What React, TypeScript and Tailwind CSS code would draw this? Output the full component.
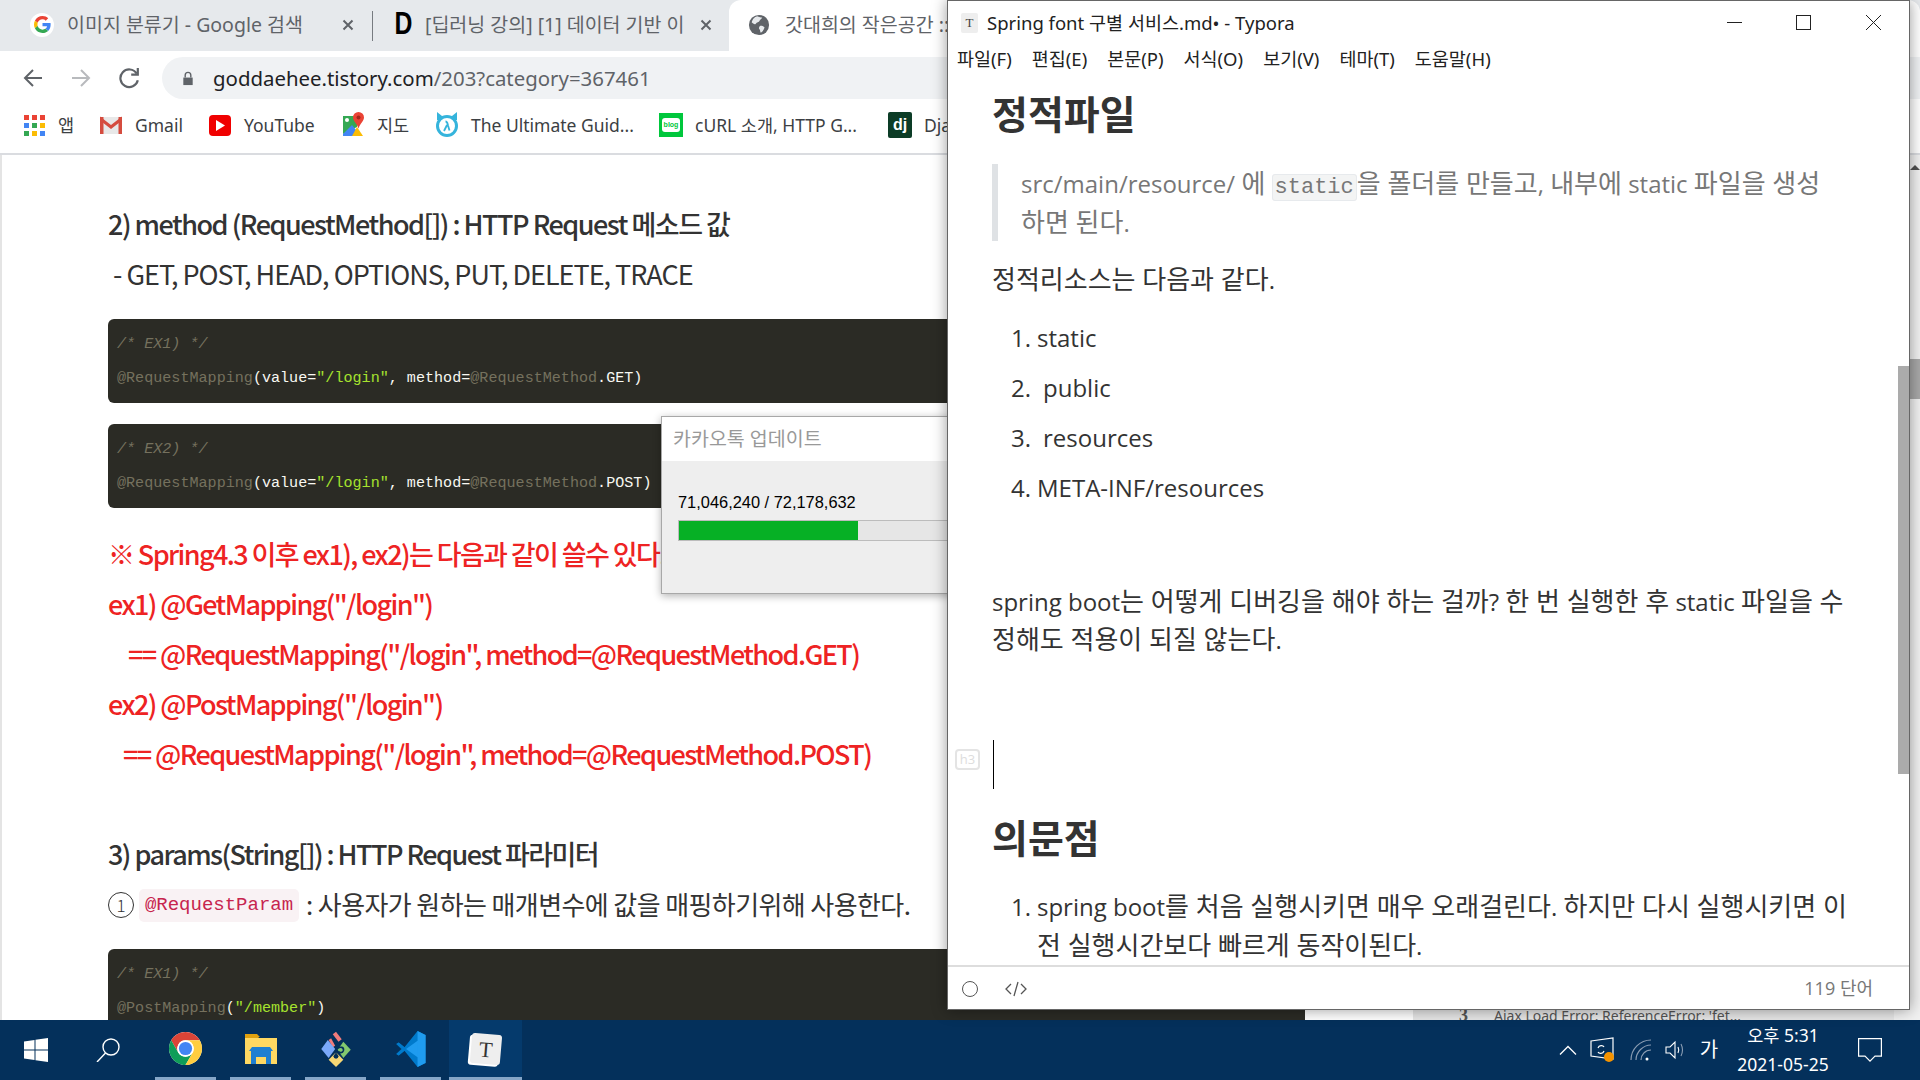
import React from 'react';

// hangul runs are set a bit larger than the latin around them
const ko = (text: string) =>
  text.split(/([\uAC00-\uD7A3]+(?:\s+[\uAC00-\uD7A3]+)*)/).map((part, i) =>
    i % 2 === 1 ? (
      <span key={i} className="text-[26px] leading-none">{part}</span>
    ) : (
      part
    ),
  );

const GoogleIcon = () => (
  <span className="flex h-[24px] w-[24px] shrink-0 items-center justify-center rounded-full bg-white">
    <svg viewBox="0 0 48 48" className="h-[17px] w-[17px]">
      <path fill="#EA4335" d="M24 9.5c3.54 0 6.71 1.22 9.21 3.6l6.85-6.85C35.9 2.38 30.47 0 24 0 14.62 0 6.51 5.38 2.56 13.22l7.98 6.19C12.43 13.72 17.74 9.5 24 9.5z" />
      <path fill="#4285F4" d="M46.98 24.55c0-1.57-.15-3.09-.38-4.55H24v9.02h12.94c-.58 2.96-2.26 5.48-4.78 7.18l7.73 6c4.51-4.18 7.09-10.36 7.09-17.65z" />
      <path fill="#FBBC05" d="M10.53 28.59c-.48-1.45-.76-2.99-.76-4.59s.27-3.14.76-4.59l-7.98-6.19C.92 16.46 0 20.12 0 24c0 3.88.92 7.54 2.56 10.78l7.97-6.19z" />
      <path fill="#34A853" d="M24 48c6.48 0 11.93-2.13 15.89-5.81l-7.73-6c-2.15 1.45-4.92 2.3-8.16 2.3-6.26 0-11.57-4.22-13.47-9.91l-7.98 6.19C6.51 42.62 14.62 48 24 48z" />
    </svg>
  </span>
);

const TabClose = () => (
  <svg viewBox="0 0 12 12" className="h-[12px] w-[12px] shrink-0" stroke="#5f6368" strokeWidth="2">
    <path d="M1.5 1.5l9 9M10.5 1.5l-9 9" />
  </svg>
);

const GlobeIcon = () => (
  <svg viewBox="0 0 24 24" className="h-[22px] w-[22px] shrink-0">
    <circle cx="12" cy="12" r="11" fill="#5f6368" />
    <path fill="#e6e9ec" d="M10 2.5c2 1 4 1.5 5.5 1-.5 2-2.5 2.5-3 4-.5 1.5-3 1-4 3-1 1.500-3 0-4.500-1.500C5 5.500 7 3 10 2.500zM13 13c2-.5 4 .5 5 1.500-.5 2.500-2 4.500-4 6-1-1.500-.5-3-1.500-4-1-1-.5-2.500.5-3.500z" />
  </svg>
);

const AppsIcon = () => (
  <svg viewBox="0 0 21 21" className="h-[21px] w-[21px]">
    {['#ea4335', '#ea4335', '#ea4335', '#4285f4', '#34a853', '#fbbc05', '#34a853', '#fbbc05', '#4285f4'].map((c, i) => (
      <rect key={i} x={(i % 3) * 8} y={Math.floor(i / 3) * 8} width="5" height="5" fill={c} />
    ))}
  </svg>
);

const GmailIcon = () => (
  <svg viewBox="0 0 24 20" className="h-[20px] w-[24px]">
    <path fill="#e8e8e8" d="M1 2h22v17H1z" />
    <path fill="#d54c3f" d="M1 2h3.500v17H1zM19.500 2H23v17h-3.500z" />
    <path fill="#d54c3f" d="M1 1.500l11 8.500 11-8.500v4L12 14 1 5.500z" />
  </svg>
);

const YoutubeIcon = () => (
  <span className="flex h-[21px] w-[22px] items-center justify-center rounded-[4px] bg-[#f00000]">
    <svg viewBox="0 0 10 12" className="h-[11px] w-[9px]"><path fill="#fff" d="M0 0l10 6-10 6z" /></svg>
  </span>
);

const MapsIcon = () => (
  <svg viewBox="0 0 24 26" className="h-[26px] w-[24px]">
    <path fill="#34a853" d="M2 4h14v11L2 22z" />
    <path fill="#4285f4" d="M2 22l9-9 9 11H2z" />
    <path fill="#fbbc05" d="M11 24l5-9 6 9z" />
    <path fill="#ea4335" d="M17.500 0a5.500 5.500 0 0 1 5.500 5.500c0 3.500-4 6-5.500 11-1.500-5-5.500-7.500-5.500-11A5.500 5.500 0 0 1 17.500 0z" />
    <circle cx="17.500" cy="5.500" r="2" fill="#a3261b" />
    <circle cx="6" cy="8" r="2" fill="#fff" />
  </svg>
);

const UltimateIcon = () => (
  <svg viewBox="0 0 24 28" className="h-[28px] w-[24px]">
    <path fill="#35b4dc" d="M2 1l5 4h10l5-4v8h-2.500L17 6H7L4.500 9H2z" />
    <circle cx="12" cy="15" r="9.500" fill="#fff" stroke="#35b4dc" strokeWidth="3" />
    <path d="M9 20l3-6M10.500 10.500c2 0 2 2 2.500 4l1.500 5" fill="none" stroke="#35b4dc" strokeWidth="1.800" />
  </svg>
);

const BlogIcon = () => (
  <span className="flex h-[24px] w-[24px] items-center justify-center bg-[#00c73c]">
    <span className="flex h-[14px] w-[18px] items-center justify-center rounded-[3px] bg-white font-['Liberation_Sans',sans-serif] text-[7px] font-bold text-[#00c73c]">blog</span>
  </span>
);

const DjangoIcon = () => (
  <span className="flex h-[26px] w-[24px] items-center justify-center rounded-[2px] bg-[#0c3c26] font-['Liberation_Sans',sans-serif] text-[16px] font-bold leading-none text-white">dj</span>
);

const bookmarks = [
  { icon: <AppsIcon />, label: '앱', width: 'w-[77px]' },
  { icon: <GmailIcon />, label: 'Gmail', width: 'w-[109px]' },
  { icon: <YoutubeIcon />, label: 'YouTube', width: 'w-[133px]' },
  { icon: <MapsIcon />, label: '지도', width: 'w-[94px]' },
  { icon: <UltimateIcon />, label: 'The Ultimate Guid...', width: 'w-[224px]' },
  { icon: <BlogIcon />, label: 'cURL 소개, HTTP G...', width: 'w-[229px]' },
  { icon: <DjangoIcon />, label: 'Django', width: 'w-[100px]' },
];

const Comment = ({ children }: { children: React.ReactNode }) => (
  <div className="h-[34px] italic leading-[34px] text-[#75715e]">{children}</div>
);

const Ann = ({ children }: { children: React.ReactNode }) => <span className="text-[#75715e]">{children}</span>;
const Str = ({ children }: { children: React.ReactNode }) => <span className="text-[#a6e22e]">{children}</span>;

const CodeBlock = ({ top, children }: { top: string; children: React.ReactNode }) => (
  <div className={`${top} h-[84px] w-[1197px] rounded-[6px] bg-[#2b2b25] px-[9px] py-[8px] font-['Liberation_Mono',monospace] text-[15.1px] text-[#f8f8f2]`}>
    {children}
  </div>
);

const MappingCode = ({ method, label }: { method: string; label: string }) => (
  <CodeBlock top={label === 'EX1' ? 'mt-[19px]' : 'mt-[21px]'}>
    <Comment>{`/* ${label}) */`}</Comment>
    <div className="h-[34px] leading-[34px]">
      <Ann>@RequestMapping</Ann>(value=<Str>"/login"</Str>, method=<Ann>@RequestMethod</Ann>.{method})
    </div>
  </CodeBlock>
);

const Article = () => (
  <div className="w-[1413px] shrink-0 border-l-2 border-[#e4e4e4] pl-[106px] pt-[45px] font-['Noto_Sans_CJK_KR',sans-serif] text-[27px] text-[#333333]">
    <div className="h-[50px] whitespace-nowrap font-medium leading-[47px] tracking-[-1.5px]">2) method (RequestMethod[]) : HTTP Request 메소드 값</div>
    <div className="h-[50px] whitespace-nowrap pl-[5px] leading-[47px] tracking-[-1px]">- GET, POST, HEAD, OPTIONS, PUT, DELETE, TRACE</div>
    <MappingCode label="EX1" method="GET" />
    <MappingCode label="EX2" method="POST" />
    <div className="mt-[22px] whitespace-nowrap font-medium leading-[47px] tracking-[-1.6px] text-[#ee2323]">
      <div className="h-[50px]">※ Spring4.3 이후 ex1), ex2)는 다음과 같이 쓸수 있다.</div>
      <div className="h-[50px]">ex1) @GetMapping("/login")</div>
      <div className="h-[50px] pl-[20px]">== @RequestMapping("/login", method=@RequestMethod.GET)</div>
      <div className="h-[50px]">ex2) @PostMapping("/login")</div>
      <div className="h-[50px] pl-[15px]">== @RequestMapping("/login", method=@RequestMethod.POST)</div>
    </div>
    <div className="mt-[50px] h-[50px] whitespace-nowrap font-medium leading-[47px] tracking-[-1.55px]">3) params(String[]) : HTTP Request 파라미터</div>
    <div className="flex h-[50px] items-center whitespace-nowrap text-[26px] tracking-[-0.6px]">
      <span className="flex h-[26px] w-[26px] shrink-0 items-center justify-center rounded-full border border-[#333333] text-[17px] font-light tracking-normal">1</span>
      <span className="ml-[5px] flex h-[33px] w-[160px] shrink-0 items-center justify-center rounded-[5px] bg-[#f9f2f4] font-['Liberation_Mono',monospace] text-[19px] tracking-normal text-[#c7254e]">@RequestParam</span>
      <span className="mb-[3px] ml-[7px]">: 사용자가 원하는 매개변수에 값을 매핑하기위해 사용한다.</span>
    </div>
    <CodeBlock top="mt-[19px]">
      <Comment>/* EX1) */</Comment>
      <div className="h-[34px] leading-[34px]">
        <Ann>@PostMapping</Ann>(<Str>"/member"</Str>)
      </div>
    </CodeBlock>
  </div>
);

const Sidebar = () => (
  <div className="w-[481px] shrink-0 bg-[#e6e6e6] pl-[46px] pt-[848px] font-['Noto_Sans',sans-serif] text-[14px] text-[#555555]">
    <div className="flex h-[24px] items-center whitespace-nowrap">
      <span className="w-[35px] font-['Liberation_Serif',serif] text-[18px] font-bold">3</span>
      <span>Ajax Load Error: ReferenceError: 'fet...</span>
    </div>
  </div>
);

const Browser = () => (
  <div className="flex min-h-0 flex-1 flex-col font-['Noto_Sans','Noto_Sans_CJK_KR',sans-serif]">
    {/* tab strip */}
    <div className="flex h-[51px] shrink-0 bg-[#e6e9ec] text-[19.5px] text-[#5f6368]">
      <div className="flex h-[49px] w-[372px] shrink-0 items-center pl-[30px]">
        <GoogleIcon />
        <span className="ml-[13px] w-[275px] truncate">이미지 분류기 - Google 검색</span>
        <TabClose />
      </div>
      <div className="mt-[11px] h-[30px] w-px shrink-0 bg-[#777b80]" />
      <div className="flex h-[49px] w-[356px] shrink-0 items-center pl-[18px]">
        <span className="w-[34px] scale-x-[0.8] font-['Liberation_Sans',sans-serif] text-[31px] font-bold text-black">D</span>
        <span className="w-[258px] overflow-hidden whitespace-nowrap">[딥러닝 강의] [1] 데이터 기반 이미지</span>
        <span className="ml-[17px]"><TabClose /></span>
      </div>
      <div className="flex h-[51px] flex-1 items-center overflow-hidden rounded-t-[12px] bg-white pb-[2px] pl-[19px]">
        <GlobeIcon />
        <span className="ml-[15px] whitespace-nowrap">갓대희의 작은공간 ::</span>
      </div>
    </div>
    {/* toolbar */}
    <div className="flex h-[51px] shrink-0 items-center bg-white pt-[3px]">
      <div className="flex w-[162px] shrink-0 items-center pl-[23px]">
        <svg viewBox="0 0 20 20" className="h-[20px] w-[20px]" fill="none" stroke="#5f6368" strokeWidth="2"><path d="M19 10H2M10 2l-8 8 8 8" /></svg>
        <svg viewBox="0 0 20 20" className="ml-[28px] h-[20px] w-[20px]" fill="none" stroke="#b8babd" strokeWidth="2"><path d="M1 10h17M10 2l8 8-8 8" /></svg>
        <svg viewBox="0 0 20 20" className="ml-[27px] h-[22px] w-[22px]" fill="none" stroke="#5f6368" strokeWidth="2"><path d="M17 6a8 8 0 1 0 1 6" /><path d="M18 1v6h-6" /></svg>
      </div>
      <div className="flex h-[42px] flex-1 items-center rounded-l-full bg-[#f0f2f4] pl-[20px] text-[20.4px]">
        <svg viewBox="0 0 12 16" className="h-[15px] w-[12px] shrink-0"><path fill="#5f6368" d="M1 7h10v8H1z" /><path d="M3 7V4.500a3 3 0 0 1 6 0V7" fill="none" stroke="#5f6368" strokeWidth="1.500" /></svg>
        <span className="ml-[19px] text-[#202124]">goddaehee.tistory.com<span className="text-[#5f6368]">/203?category=367461</span></span>
      </div>
    </div>
    {/* bookmarks */}
    <div className="flex h-[51px] shrink-0 items-center bg-white pb-[5px] pl-[22px] text-[17.5px] text-[#3c4043]">
      {bookmarks.map((b) => (
        <div key={b.label} className={`flex ${b.width} shrink-0 items-center overflow-hidden whitespace-nowrap`}>
          <span className="flex w-[24px] shrink-0 justify-center">{b.icon}</span>
          <span className="ml-[12px]">{b.label}</span>
        </div>
      ))}
    </div>
    {/* page */}
    <div className="flex min-h-0 flex-1 overflow-hidden border-t-2 border-[#dadce0] bg-white">
      <Article />
      <Sidebar />
      <div className="w-[16px] bg-[#f1f1f1]" />
      <div className="flex w-[10px] shrink-0 flex-col bg-[#f1f1f1] pt-[10px]">
        <svg viewBox="0 0 10 5" className="h-[5px] w-[10px] shrink-0"><path fill="#505050" d="M5 0l5 5H0z" /></svg>
        <div className="mt-[189px] h-[40px] shrink-0 bg-[#a8a8a8]" />
      </div>
    </div>
  </div>
);

const Typora = () => (
  <div className="absolute left-[947px] top-0 flex h-[1010px] w-[963px] flex-col overflow-hidden border border-[#666666] bg-white font-['Open_Sans','Noto_Sans_CJK_KR',sans-serif] shadow-[0_0_14px_rgba(0,0,0,0.4)]">
    <div className="flex h-[43px] shrink-0 items-center pl-[13px] font-['Noto_Sans','Noto_Sans_CJK_KR',sans-serif] text-[18.5px] text-[#222222]">
      <span className="flex h-[20px] w-[17px] items-center justify-center rounded-[2px] bg-[#eeeeee] font-['Liberation_Serif',serif] text-[13px] text-[#444444]">T</span>
      <span className="ml-[9px] whitespace-nowrap">Spring font 구별 서비스.md• - Typora</span>
      <div className="mb-[1px] ml-auto flex items-center pr-[28px]">
        <span className="h-px w-[15px] bg-[#222222]" />
        <span className="ml-[54px] h-[15px] w-[15px] border border-[#222222]" />
        <svg viewBox="0 0 15 15" className="ml-[55px] h-[15px] w-[15px]" stroke="#222222" strokeWidth="1"><path d="M0 0l15 15M15 0L0 15" /></svg>
      </div>
    </div>
    <div className="flex h-[30px] shrink-0 items-center gap-[20px] pl-[9px] font-['Noto_Sans','Noto_Sans_CJK_KR',sans-serif] text-[18.5px] text-[#222222]">
      {['파일(F)', '편집(E)', '본문(P)', '서식(O)', '보기(V)', '테마(T)', '도움말(H)'].map((m) => (
        <span key={m} className="whitespace-nowrap">{m}</span>
      ))}
    </div>
    <div className="flex min-h-0 flex-1">
      <div className="min-w-0 flex-1 overflow-hidden pl-[44px] text-[24px] leading-[38px] text-[#333333]">
        <h2 className="mt-[15px] h-[50px] text-[39px] font-bold leading-[50px]">정적파일</h2>
        <div className="mt-[25px] h-[77px] whitespace-nowrap border-l-[6px] border-[#dfe2e5] pl-[23px] leading-[39px] text-[#777777]">
          {ko('src/main/resource/ 에 ')}
          <code className="rounded-[3px] border border-[#e7eaed] bg-[#f3f4f4] px-[2px] font-['Liberation_Mono',monospace] text-[22px] leading-none text-[#777777]">static</code>
          {ko('을 폴더를 만들고, 내부에 static 파일을 생성')}
          <br />
          {ko('하면 된다.')}
        </div>
        <p className="mt-[20px] h-[38px]">{ko('정적리소스는 다음과 같다.')}</p>
        <ol className="mt-[20px] flex flex-col gap-[12px] pl-[19px]">
          <li className="flex"><span className="w-[26px]">1.</span>static</li>
          <li className="flex"><span className="w-[32px]">2.</span>public</li>
          <li className="flex"><span className="w-[32px]">3.</span>resources</li>
          <li className="flex"><span className="w-[26px]">4.</span>META-INF/resources</li>
        </ol>
        <p className="mt-[76px] h-[76px] whitespace-nowrap">
          {ko('spring boot는 어떻게 디버깅을 해야 하는 걸까? 한 번 실행한 후 static 파일을 수')}
          <br />
          {ko('정해도 적용이 되질 않는다.')}
        </p>
        <div className="relative ml-[1px] mt-[81px] h-[49px] w-px bg-black">
          <span className="absolute left-[-38px] top-[9px] flex h-[21px] w-[25px] items-center justify-center rounded-[4px] border-2 border-[#e4e4e4] text-[13px] leading-none text-[#dddddd]">h3</span>
        </div>
        <h2 className="mt-[24px] h-[50px] text-[39px] font-bold leading-[50px]">의문점</h2>
        <ol className="mt-[25px] pl-[19px] leading-[38.5px]">
          <li className="flex whitespace-nowrap">
            <span className="w-[26px] shrink-0">1.</span>
            <span>
              {ko('spring boot를 처음 실행시키면 매우 오래걸린다. 하지만 다시 실행시키면 이')}
              <br />
              {ko('전 실행시간보다 빠르게 동작이된다.')}
            </span>
          </li>
        </ol>
      </div>
      <div className="flex w-[11px] shrink-0 flex-col pt-[292px]">
        <div className="h-[408px] bg-[#ababab]" />
      </div>
    </div>
    <div className="flex h-[44px] shrink-0 items-center border-t-2 border-[#dddddd] pl-[14px] pr-[36px] pt-[1px] text-[#777777]">
      <span className="h-[16px] w-[16px] rounded-full border-[1.5px] border-[#555555]" />
      <svg viewBox="0 0 22 16" className="ml-[27px] h-[16px] w-[22px]" fill="none" stroke="#555555" strokeWidth="1.300"><path d="M6 3L1 8l5 5M16 3l5 5-5 5M13 1L9 15" /></svg>
      <span className="ml-auto text-[18px]">119 단어</span>
    </div>
  </div>
);

const KakaoDialog = () => (
  <div className="absolute left-[661px] top-[416px] flex h-[178px] w-[340px] flex-col border border-[#a8a8a8] bg-[#eeeeee] font-['Noto_Sans','Noto_Sans_CJK_KR',sans-serif] shadow-[0_2px_8px_rgba(0,0,0,0.3)]">
    <div className="flex h-[44px] shrink-0 items-center bg-white pl-[11px] text-[19.5px] text-[#999999]">카카오톡 업데이트</div>
    <div className="mt-[27px] h-[28px] pl-[16px] font-['Liberation_Sans',sans-serif] text-[16.4px] leading-[28px] text-black">71,046,240 / 72,178,632</div>
    <div className="ml-[16px] mt-[4px] h-[21px] border border-[#bcbcbc] bg-[#e6e6e6]">
      <div className="h-full w-[179px] bg-[#06b025]" />
    </div>
  </div>
);

const WindowsLogo = () => (
  <svg viewBox="0 0 24 24" className="h-[24px] w-[24px]" fill="#fff">
    <path d="M0 3.500l10.500-1.500v9.500H0zM11.500 1.800L24 0v11.500H11.500zM0 12.500h10.500V22L0 20.500zM11.500 12.500H24V24l-12.500-1.800z" />
  </svg>
);

const ChromeLogo = () => (
  <svg viewBox="4 4 40 40" className="h-[33px] w-[33px]">
    <circle cx="24" cy="24" r="20" fill="#fff" />
    <path fill="#db4437" d="M6.680 14A20 20 0 0 1 41.320 14H24a10 10 0 0 0-8.660 15z" />
    <path fill="#0f9d58" d="M6.680 14l8.660 15a10 10 0 0 0 17.320 0L24 44A20 20 0 0 1 6.680 14z" />
    <path fill="#ffcd40" d="M41.320 14H24a10 10 0 0 1 8.660 15L24 44a20 20 0 0 0 17.320-30z" />
    <circle cx="24" cy="24" r="10" fill="#fff" />
    <circle cx="24" cy="24" r="8" fill="#4285f4" />
  </svg>
);

const FolderLogo = () => (
  <svg viewBox="0 0 32 32" className="h-[32px] w-[32px]">
    <path fill="#e0a10f" d="M0 1h12l3 3h-1l-2 3H0z" />
    <path fill="#ffd862" d="M0 5h32v26H0z" />
    <path fill="#1f7fd1" d="M6 31V18h20v13h-5v-7H11v7z" />
    <path fill="#1f7fd1" d="M4 18h24l-3-4H7z" />
  </svg>
);

const ForkLogo = () => (
  <svg viewBox="0 0 36 44" className="h-[36px] w-[30px]">
    <path fill="#f27b7b" d="M14 4l4-3 7 9-4 3z" />
    <path fill="#f27b7b" d="M9 11l3-2 5 9-3 2z" />
    <path fill="#7ba9fa" d="M8 11l9 11-8 11-9-11z" />
    <path fill="#83c96e" d="M27 13l9 10-9 10-7-10z" />
    <path fill="#f7d774" d="M18 26l9 9-9 9-9-9z" />
    <path d="M18 15v16M18 22c6-4 10-2 9 2-1 3-5 3-6 1" fill="none" stroke="#04305b" strokeWidth="2" />
    <circle cx="18" cy="31" r="3" fill="#04305b" />
  </svg>
);

const VsCodeLogo = () => (
  <svg viewBox="0 0 36 44" className="h-[36px] w-[30px]">
    <path fill="#0065a9" d="M0 16l3-2 10 8-10 8-3-2 6-6z" />
    <path fill="#007acc" d="M26 0L10 20 3 14 0 16l7 6-7 6 3 2 7-6 16 20 9-5V5z" />
    <path fill="#1f9cf0" d="M26 0l10 5v34l-10 5V12L12 22l14 10z" />
  </svg>
);

const TyporaLogo = () => (
  <span className="flex h-[30px] w-[30px] rotate-[5deg] items-center justify-center rounded-[3px] bg-[#eeeeee] font-['Liberation_Serif',serif] text-[22px] text-[#333333] shadow-[-2px_2px_0_#ffffff]">T</span>
);

const taskApps = [
  { logo: <ChromeLogo />, cls: 'ml-[35px] w-[61px]' },
  { logo: <FolderLogo />, cls: 'ml-[14px] w-[61px]' },
  { logo: <ForkLogo />, cls: 'ml-[14px] w-[61px]' },
  { logo: <VsCodeLogo />, cls: 'ml-[14px] w-[61px]' },
  { logo: <TyporaLogo />, cls: 'ml-[8px] w-[73px] bg-[#053a6c]' },
];

const Taskbar = () => (
  <div className="flex h-[60px] shrink-0 items-center bg-[#04305b] font-['Noto_Sans','Noto_Sans_CJK_KR',sans-serif] text-white">
    <div className="ml-[24px]"><WindowsLogo /></div>
    <svg viewBox="0 0 24 24" className="ml-[48px] h-[24px] w-[24px]" fill="none" stroke="#fff" strokeWidth="1.400">
      <circle cx="15" cy="9" r="8" />
      <path d="M9.500 15L1 24" />
    </svg>
    {taskApps.map((a, i) => (
      <div key={i} className={`${a.cls} flex h-[60px] shrink-0 items-center justify-center border-b-[3px] border-[#86a6c8]`}>
        {a.logo}
      </div>
    ))}
    <div className="ml-auto flex items-center pr-[38px]">
      <svg viewBox="0 0 18 10" className="h-[10px] w-[18px]" fill="none" stroke="#fff" strokeWidth="1.300"><path d="M1 9.500l8-8 8 8" /></svg>
      <svg viewBox="0 0 26 26" className="ml-[13px] h-[26px] w-[26px]" fill="none" stroke="#fff" strokeWidth="1.200">
        <path d="M1 4l22-3v21L1 19z" />
        <path d="M8 11c1-3 5-3 6-1M14 14c-1 3-5 3-6 1" />
        <circle cx="19" cy="20" r="5" fill="#f59300" stroke="none" />
      </svg>
      <svg viewBox="0 0 22 22" className="ml-[14px] h-[22px] w-[22px]" fill="none" stroke="#8b9db3" strokeWidth="1.200">
        <path d="M1 21C1 10 10 1 21 1M6 21C6 13 13 6 21 6M11 21c0-5 4-10 10-10" />
        <circle cx="17" cy="20" r="1.500" fill="#fff" stroke="none" />
      </svg>
      <svg viewBox="0 0 22 20" className="ml-[13px] h-[20px] w-[22px]" fill="none" stroke="#fff" strokeWidth="1.100">
        <path d="M1 7h4l5-5v16l-5-5H1z" />
        <path d="M13 7c1 2 1 4 0 6" />
        <path stroke="#8b9db3" d="M16 4c2 4 2 8 0 12" />
      </svg>
      <span className="ml-[9px] w-[26px] text-center text-[20px]">가</span>
      <div className="ml-[13px] flex w-[96px] flex-col items-center text-[17.5px] leading-[29px]">
        <span>오후 5:31</span>
        <span>2021-05-25</span>
      </div>
      <svg viewBox="0 0 24 24" className="ml-[27px] h-[24px] w-[24px]" fill="none" stroke="#fff" strokeWidth="1.200">
        <path d="M.6.600h22.800v17.500H17l-5 5-5-5H.6z" />
      </svg>
    </div>
  </div>
);

export default function App() {
  return (
    <div className="relative flex h-[1080px] w-[1920px] flex-col overflow-hidden bg-white">
      <Browser />
      <Taskbar />
      <KakaoDialog />
      <Typora />
    </div>
  );
}
